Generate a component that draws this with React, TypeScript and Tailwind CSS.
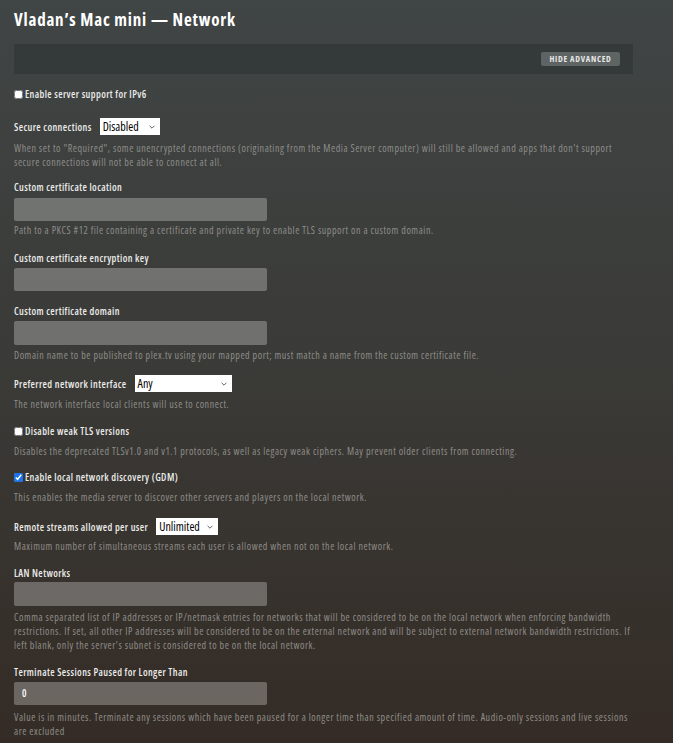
import React from 'react';

const help = 'text-[10px] leading-[14px] tracking-[0.55px] text-[#8e8d89]';
const label = 'text-[10px] leading-[14px] font-semibold tracking-[0.4px] text-[#ececea]';

const Select: React.FC<{ value: string; width: string }> = ({ value, width }) => (
  <div className={`flex h-[17px] items-center justify-between bg-white pr-[5px] pl-[3px] text-[12px] text-black ${width}`}>
    <span>{value}</span>
    <svg viewBox="0 0 10 6" className="h-[4px] w-[6px]" fill="none" stroke="#444" strokeWidth="1.4">
      <path d="M1 1l4 4 4-4" />
    </svg>
  </div>
);

const TextField: React.FC<{ value?: string; className?: string }> = ({ value, className = 'mt-[4px] h-[23px]' }) => (
  <div
    className={`flex w-[253px] items-center rounded-[2px] bg-white/[0.27] px-[8px] text-[10px] font-semibold text-white ${className}`}
  >
    {value}
  </div>
);

const Check: React.FC<{ checked?: boolean; text: string }> = ({ checked, text }) => (
  <label className={`flex items-center gap-[2px] ${label}`}>
    <input type="checkbox" defaultChecked={checked} className="m-0 h-[9px] w-[9px] accent-[#1a73e8]" />
    <span>{text}</span>
  </label>
);

export default function App() {
  return (
    <div
      className="min-h-[743px] w-full bg-gradient-to-b from-[#404545] via-[#3a3a37] to-[#342b25] px-[14px] pt-[9px] pb-4 font-stretch-condensed"
      style={{ fontFamily: '"Open Sans", "Noto Sans", sans-serif' }}
    >
      <div className="max-w-[620px]">
        <h1 className="text-[17px] font-bold leading-[22px] tracking-[0.8px] text-white">Vladan’s Mac mini — Network</h1>

        {/* advanced toggle bar */}
        <div className="mt-[13px] flex h-[30px] w-[619px] items-center justify-end bg-[#323837]/80 pr-[13px]">
          <button className="h-[14px] w-[79px] rounded-[2px] bg-[#5e6363] text-center text-[8.5px] font-bold uppercase leading-[14px] tracking-[0.7px] text-[#e6e6e6]">
            Hide Advanced
          </button>
        </div>

        <div className="mt-[13px]">
          <Check text="Enable server support for IPv6" />
        </div>

        <div className="mt-[17px] flex items-center gap-[8px]">
          <span className={label}>Secure connections</span>
          <Select value="Disabled" width="w-[60px]" />
        </div>
        <p className={`mt-[6px] ${help}`}>
          When set to "Required", some unencrypted connections (originating from the Media Server computer) will still be
          allowed and apps that don't support secure connections will not be able to connect at all.
        </p>

        <div className="mt-[11px]">
          <div className={label}>Custom certificate location</div>
          <TextField />
          <p className={`mt-[2px] ${help}`}>
            Path to a PKCS #12 file containing a certificate and private key to enable TLS support on a custom domain.
          </p>
        </div>

        <div className="mt-[14px]">
          <div className={label}>Custom certificate encryption key</div>
          <TextField className="mt-[3px] h-[23px]" />
        </div>

        <div className="mt-[13px]">
          <div className={label}>Custom certificate domain</div>
          <TextField className="mt-[3px] h-[24px]" />
          <p className={`mt-[3px] ${help}`}>
            Domain name to be published to plex.tv using your mapped port; must match a name from the custom certificate file.
          </p>
        </div>

        <div className="mt-[13px] flex items-center gap-[8px]">
          <span className={label}>Preferred network interface</span>
          <Select value="Any" width="w-[97px]" />
        </div>
        <p className={`mt-[5px] ${help}`}>The network interface local clients will use to connect.</p>

        <div className="mt-[13px]">
          <Check text="Disable weak TLS versions" />
        </div>
        <p className={`mt-[6px] ${help}`}>
          Disables the deprecated TLSv1.0 and v1.1 protocols, as well as legacy weak ciphers. May prevent older clients from
          connecting.
        </p>

        <div className="mt-[12px]">
          <Check checked text="Enable local network discovery (GDM)" />
        </div>
        <p className={`mt-[6px] ${help}`}>
          This enables the media server to discover other servers and players on the local network.
        </p>

        <div className="mt-[14px] flex items-center gap-[8px]">
          <span className={label}>Remote streams allowed per user</span>
          <Select value="Unlimited" width="w-[62px]" />
        </div>
        <p className={`mt-[4px] ${help}`}>
          Maximum number of simultaneous streams each user is allowed when not on the local network.
        </p>

        <div className="mt-[13px]">
          <div className={label}>LAN Networks</div>
          <TextField className="mt-[2px] h-[24px]" />
          <p className={`mt-[4px] ${help}`}>
            Comma separated list of IP addresses or IP/netmask entries for networks that will be considered to be on the
            local network when enforcing bandwidth restrictions. If set, all other IP addresses will be considered to be on
            the external network and will be subject to external network bandwidth restrictions. If left blank, only the
            server's subnet is considered to be on the local network.
          </p>
        </div>

        <div className="mt-[13px]">
          <div className={label}>Terminate Sessions Paused for Longer Than</div>
          <TextField value="0" className="mt-[3px] h-[23px]" />
          <p className={`mt-[5px] ${help}`}>
            Value is in minutes. Terminate any sessions which have been paused for a longer time than specified amount of
            time. Audio-only sessions and live sessions are excluded
          </p>
        </div>
      </div>
    </div>
  );
}
